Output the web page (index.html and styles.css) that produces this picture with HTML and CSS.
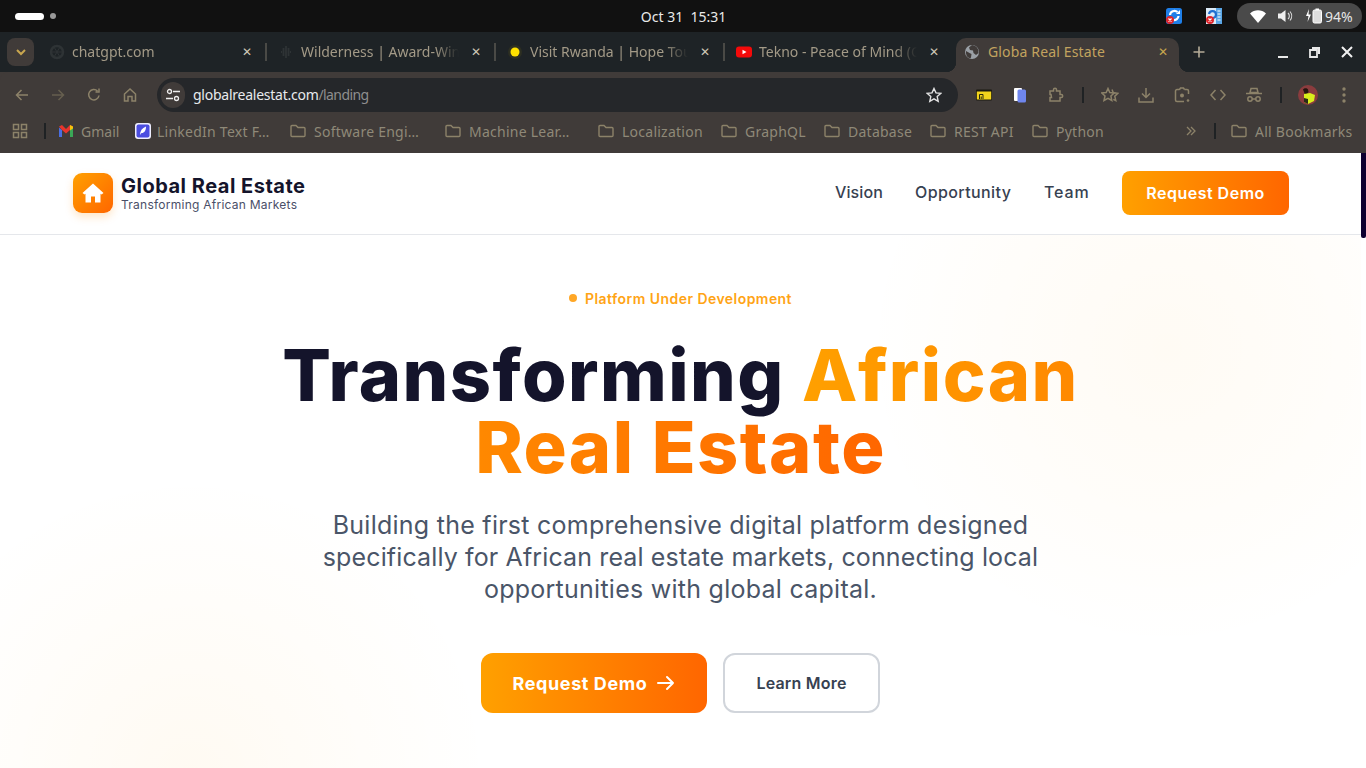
FILE: index.html
```html
<!DOCTYPE html>
<html lang="en">
<head>
<meta charset="utf-8">
<title>Globa Real Estate</title>
<link rel="stylesheet" href="styles.css">
</head>
<body>
<div class="topbar">
  <div class="activities"><span class="pill-on"></span><span class="pill-off"></span></div>
  <div class="clock">Oct 31&nbsp;&nbsp;15:31</div>
  <div class="tray">
    <svg class="tray-app" width="18" height="18" viewBox="0 0 18 18"><rect x="1" y="1" width="16" height="16" rx="2.5" fill="#1f7fe8"/><path d="M5 8a4.500 4.500 0 0 1 7.500-3M13.500 9a4.500 4.500 0 0 1-5 4" fill="none" stroke="#fff" stroke-width="2.200"/><path d="M11 7h4V3z" fill="#fff"/><circle cx="5" cy="13" r="4" fill="#e0242a"/><path d="M3.500 11.500l3 3m0-3l-3 3" stroke="#fff" stroke-width="1.200"/></svg>
    <svg class="tray-app second" width="18" height="18" viewBox="0 0 18 18"><rect x="1" y="1" width="16" height="16" fill="#dcebf8"/><rect x="11" y="1" width="6" height="16" fill="#5aa6e6"/><path d="M4 7a3.500 3.500 0 1 1 4 4" fill="none" stroke="#1f6fd0" stroke-width="2.200"/><path d="M12.500 4h3m-3 3h3m-3 3h3m-3 3h3" stroke="#fff"/><circle cx="5" cy="13" r="4" fill="#e0242a"/><path d="M3.500 11.500l3 3m0-3l-3 3" stroke="#fff" stroke-width="1.200"/></svg>
    <div class="status">
      <svg width="16" height="13" viewBox="0 0 16 13"><path d="M0 3.500C4.500-.8 11.500-.8 16 3.500L8 13z" fill="#fff"/></svg>
      <svg class="vol" width="16" height="14" viewBox="0 0 16 14"><path d="M0 4.500h3L7.500 1v12L3 9.500H0z" fill="#eee"/><path d="M10 4a4 4 0 0 1 0 6M12 2.500a7 7 0 0 1 0 9" fill="none" stroke="#ddd" stroke-width="1.100"/></svg>
      <svg class="batt" width="18" height="16" viewBox="0 0 18 16"><path d="M4 1L1 8h2.500L2.500 14 6 6.500H3.500z" fill="#fff"/><rect x="8" y="2" width="8.500" height="13" rx="1.500" fill="#ddd" stroke="#fff"/><rect x="10.500" y=".5" width="3.500" height="1.500" fill="#fff"/></svg>
      <span class="pct">94%</span>
    </div>
  </div>
</div>

<div class="tabstrip">
  <div class="tab-menu"><svg width="12" height="8" viewBox="0 0 12 8"><path d="M2 2l4 4 4-4" fill="none" stroke="#c8a64f" stroke-width="2"/></svg></div>
  <div class="tab">
    <svg class="fav" width="16" height="16" viewBox="0 0 16 16"><circle cx="8" cy="8" r="6" fill="none" stroke="#2e3335" stroke-width="2.500"/><path d="M5 3l6 10M11 3L5 13M2 8h12" stroke="#2e3335"/></svg>
    <span class="tab-title">chatgpt.com</span><span class="tab-x">✕</span><i class="tab-sep"></i>
  </div>
  <div class="tab">
    <svg class="fav" width="16" height="16" viewBox="0 0 16 16"><path d="M3 8h1M5.500 4v8M8 2v12M10.500 4v8M13 8h-1" stroke="#2e3335" stroke-width="1.800"/></svg>
    <span class="tab-title">Wilderness | Award-Win</span><span class="tab-x">✕</span><i class="tab-sep"></i>
  </div>
  <div class="tab">
    <svg class="fav" width="16" height="16" viewBox="0 0 16 16"><circle cx="8" cy="8" r="7" fill="#2d2f22"/><circle cx="8" cy="8" r="4.500" fill="#ffe100"/></svg>
    <span class="tab-title">Visit Rwanda | Hope Tou</span><span class="tab-x">✕</span><i class="tab-sep"></i>
  </div>
  <div class="tab">
    <svg class="fav" width="16" height="16" viewBox="0 0 16 16"><rect y="2.500" width="16" height="11" rx="3" fill="#f40a0a"/><path d="M6.500 5.700v4.600L10.500 8z" fill="#fff"/></svg>
    <span class="tab-title">Tekno - Peace of Mind (O</span><span class="tab-x">✕</span>
  </div>
  <div class="tab tab-active">
    <svg class="fav" width="16" height="16" viewBox="0 0 16 16"><circle cx="8" cy="8" r="7" fill="#9aa0a6"/><path d="M8 1L5 3.500l1 2.500 3 .5.500 2.500L12 11l2.500-2A7 7 0 0 0 8 1zM2 7l3.500 2 2 1-.5 3.500-1 1A7 7 0 0 1 2 7z" fill="#403b39"/></svg>
    <span class="tab-title">Globa Real Estate</span><span class="tab-x">✕</span>
  </div>
  <div class="tab-new"><svg width="14" height="14" viewBox="0 0 14 14"><path d="M7 1.500v11M1.500 7h11" stroke="#b5ac98" stroke-width="1.600"/></svg></div>
  <div class="winctl">
    <svg width="12" height="12" viewBox="0 0 12 12"><rect x="1" y="10" width="10" height="2" fill="#e8e8e8"/></svg>
    <svg width="12" height="12" viewBox="0 0 12 12"><path d="M3 1h8v7H9V3H3z" fill="#e8e8e8"/><path d="M1 4h7v7H1z" fill="#1e2326" stroke="#e8e8e8" stroke-width="1.800"/></svg>
    <svg width="12" height="12" viewBox="0 0 12 12"><path d="M1 1l10 10M11 1L1 11" stroke="#f0f0f0" stroke-width="2"/></svg>
  </div>
</div>

<div class="toolbar">
  <div class="tool"><svg width="16" height="16" viewBox="0 0 16 16"><path d="M14 8H3M7.500 3L2.500 8l5 5" class="ic"/></svg></div>
  <div class="tool"><svg width="16" height="16" viewBox="0 0 16 16"><path d="M2 8h11M8.500 3l5 5-5 5" class="ic dim"/></svg></div>
  <div class="tool"><svg width="16" height="16" viewBox="0 0 16 16"><path d="M13 8.500A5.200 5.200 0 1 1 11.500 4M13 1.500V5H9.500" class="ic"/></svg></div>
  <div class="tool"><svg width="16" height="16" viewBox="0 0 16 16"><path d="M2.500 7L8 2l5.500 5v7H10V9.500H6V14H2.500z" class="ic"/></svg></div>
  <div class="omnibox">
    <div class="site-ctl"><svg width="16" height="16" viewBox="0 0 16 16"><circle cx="4.500" cy="4.500" r="2" fill="none" stroke="#eee" stroke-width="1.300"/><path d="M8 4.500h7M1 11.500h7" stroke="#eee" stroke-width="1.300"/><circle cx="11.500" cy="11.500" r="2" fill="none" stroke="#eee" stroke-width="1.300"/></svg></div>
    <div class="url"><span class="host">globalrealestat.com</span><span class="path">/landing</span></div>
    <svg class="url-star" width="16" height="16" viewBox="0 0 16 16"><path d="M8 1.500l2 4.400 4.700.5-3.500 3.200 1 4.700L8 11.900l-4.200 2.400 1-4.700L1.300 6.400 6 5.900z" fill="none" stroke="#e3e3e3" stroke-width="1.400"/></svg>
  </div>
  <div class="tools-right">
    <div class="tool"><svg width="16" height="12" viewBox="0 0 16 12"><rect width="16" height="11" y=".5" rx="1" fill="#1a1a12"/><rect x=".8" y="2.500" width="14.400" height="8" fill="#f2d41c"/><path d="M3.500 10V5.500h3.500V10M5.200 10V7.500" fill="none" stroke="#2a2a10" stroke-width="1"/></svg></div>
    <div class="tool"><svg width="14" height="16" viewBox="0 0 14 16"><rect x="1" y="1" width="8" height="13" rx="1" fill="#fff"/><rect x="4.500" y="2.500" width="8.500" height="13" rx="1.500" fill="#6f86ee"/></svg></div>
    <div class="tool"><svg width="16" height="16" viewBox="0 0 16 16"><path d="M2 4h3.500V2.800a1.500 1.500 0 0 1 3 0V4H12v3.500h1.200a1.500 1.500 0 0 1 0 3H12V14H2v-3.500h1.500l-.5-3H2z" class="ic"/></svg></div>
    <i class="sep"></i>
    <div class="tool"><svg width="18" height="16" viewBox="0 0 18 16"><path d="M7 1.500l1.800 4 4.400.5-3.300 3 .9 4.500L7 11.300 3 13.500l1-4.500L.8 6l4.400-.5z" class="ic"/><path d="M11 2.500l1.300 3.300 4.500.5-3 3 1 4.400-2.500-1.300" class="ic"/></svg></div>
    <div class="tool"><svg width="16" height="16" viewBox="0 0 16 16"><path d="M8 1v9M4 6.500L8 10.500l4-4M1 10.500V15h14v-4.500" class="ic"/></svg></div>
    <div class="tool"><svg width="16" height="16" viewBox="0 0 16 16"><path d="M5.500 2.500L6.500 1h3l1 1.500M1.500 6V4a1.500 1.500 0 0 1 1.500-1.500h2.500M10.500 2.500H13A1.500 1.500 0 0 1 14.500 4v3M1.500 6v7A1.500 1.500 0 0 0 3 14.500h7" class="ic"/><circle cx="8" cy="8.500" r="2" fill="#8c8269"/><circle cx="14" cy="13.500" r="1.300" fill="#8c8269"/></svg></div>
    <div class="tool"><svg width="16" height="12" viewBox="0 0 16 12"><path d="M5.500 1L1 6l4.500 5M10.500 1L15 6l-4.500 5" class="ic"/></svg></div>
    <div class="tool"><svg width="18" height="16" viewBox="0 0 18 16"><path d="M6 1.500h6l1 4H5z" fill="none" stroke="#8c8269" stroke-width="1.500"/><path d="M1 6.500h16" class="ic"/><circle cx="5" cy="12" r="2.200" class="ic"/><circle cx="13" cy="12" r="2.200" class="ic"/><path d="M7.200 12h3.600" class="ic"/></svg></div>
    <i class="sep"></i>
    <div class="tool"><svg width="20" height="20" viewBox="0 0 20 20"><circle cx="10" cy="10" r="10" fill="#8a3c3e"/><path d="M5 4.500c1-1.500 4-1.800 5 0l.5 2.500-2 2.500H7z" fill="#23150f"/><path d="M6 9l6-1 5 2-1 6-6 3-4-2z" fill="#d9ec1c"/><path d="M6 13l4 1v5l-4-2z" fill="#2a2a18"/></svg></div>
    <div class="tool"><svg width="4" height="16" viewBox="0 0 4 16"><circle cx="2" cy="2" r="1.700" fill="#8c8269"/><circle cx="2" cy="8" r="1.700" fill="#8c8269"/><circle cx="2" cy="14" r="1.700" fill="#8c8269"/></svg></div>
  </div>
</div>

<div class="bookmarks">
  <div class="bm bm-apps"><svg width="16" height="16" viewBox="0 0 16 16"><path d="M1.500 1.500h5v5h-5zM9.500 1.500h5v5h-5zM1.500 9.500h5v5h-5zM9.500 9.500h5v5h-5z" class="ic"/></svg></div>
  <div class="bm bm-sep"><i class="sep"></i></div>
  <div class="bm"><svg class="gm" width="14" height="12" viewBox="0 0 14 12"><path d="M0 2.500V12h3V5z" fill="#4a6ee0"/><path d="M14 2.500V12h-3V5z" fill="#3aa757"/><path d="M0 1.500L3 0l4 4 4-4 3 1.500-3 3.500-4 3.500L3 5z" fill="#e8352c"/><path d="M11 0l3 1.500V3.500L11 5.500z" fill="#f4c20d"/></svg><span class="tight">Gmail</span></div>
  <div class="bm bm-li"><svg width="16" height="16" viewBox="0 0 16 16"><rect width="16" height="16" rx="3" fill="#eeeeff"/><rect x="1.500" y="1.500" width="13" height="13" rx="2" fill="#4b4de0"/><path d="M5 12c0-4 2-7 6-8.500 0 4-1.500 6.500-4.500 6.500z" fill="#fff"/></svg><span>LinkedIn Text F…</span></div>
  <div class="bm"><svg class="fold" width="16" height="14" viewBox="0 0 16 14"><path d="M1 2.500A1 1 0 0 1 2 1.500h4l2 2h6a1 1 0 0 1 1 1v7a1 1 0 0 1-1 1H2a1 1 0 0 1-1-1z"/></svg><span>Software Engi…</span></div>
  <div class="bm"><svg class="fold" width="16" height="14" viewBox="0 0 16 14"><path d="M1 2.500A1 1 0 0 1 2 1.500h4l2 2h6a1 1 0 0 1 1 1v7a1 1 0 0 1-1 1H2a1 1 0 0 1-1-1z"/></svg><span>Machine Lear…</span></div>
  <div class="bm"><svg class="fold" width="16" height="14" viewBox="0 0 16 14"><path d="M1 2.500A1 1 0 0 1 2 1.500h4l2 2h6a1 1 0 0 1 1 1v7a1 1 0 0 1-1 1H2a1 1 0 0 1-1-1z"/></svg><span>Localization</span></div>
  <div class="bm"><svg class="fold" width="16" height="14" viewBox="0 0 16 14"><path d="M1 2.500A1 1 0 0 1 2 1.500h4l2 2h6a1 1 0 0 1 1 1v7a1 1 0 0 1-1 1H2a1 1 0 0 1-1-1z"/></svg><span>GraphQL</span></div>
  <div class="bm"><svg class="fold" width="16" height="14" viewBox="0 0 16 14"><path d="M1 2.500A1 1 0 0 1 2 1.500h4l2 2h6a1 1 0 0 1 1 1v7a1 1 0 0 1-1 1H2a1 1 0 0 1-1-1z"/></svg><span>Database</span></div>
  <div class="bm"><svg class="fold" width="16" height="14" viewBox="0 0 16 14"><path d="M1 2.500A1 1 0 0 1 2 1.500h4l2 2h6a1 1 0 0 1 1 1v7a1 1 0 0 1-1 1H2a1 1 0 0 1-1-1z"/></svg><span>REST API</span></div>
  <div class="bm"><svg class="fold" width="16" height="14" viewBox="0 0 16 14"><path d="M1 2.500A1 1 0 0 1 2 1.500h4l2 2h6a1 1 0 0 1 1 1v7a1 1 0 0 1-1 1H2a1 1 0 0 1-1-1z"/></svg><span>Python</span></div>
  <div class="bm bm-more"><svg width="10" height="10" viewBox="0 0 10 10"><path d="M1 1l4 4-4 4M5 1l4 4-4 4" class="ic thin"/></svg></div>
  <div class="bm bm-sep"><i class="sep"></i></div>
  <div class="bm"><svg class="fold" width="16" height="14" viewBox="0 0 16 14"><path d="M1 2.500A1 1 0 0 1 2 1.500h4l2 2h6a1 1 0 0 1 1 1v7a1 1 0 0 1-1 1H2a1 1 0 0 1-1-1z"/></svg><span>All Bookmarks</span></div>
</div>

<div class="viewport">
  <div class="page">
    <header class="site-header">
      <div class="brand">
        <div class="logo"><svg width="22" height="20" viewBox="0 0 22 20"><path d="M11 0.500L21.500 10 19.500 11.500 18.500 10.700V19.500H13V13.500H9V19.500H3.500V10.700L2.500 11.500 .5 10z" fill="#fff"/></svg></div>
        <div class="brand-text">
          <div class="brand-name">Global Real Estate</div>
          <div class="brand-sub">Transforming African Markets</div>
        </div>
      </div>
      <nav class="nav">
        <a class="nav-link nav-vision">Vision</a>
        <a class="nav-link nav-opp">Opportunity</a>
        <a class="nav-link nav-team">Team</a>
        <a class="nav-cta">Request Demo</a>
      </nav>
    </header>
    <main class="hero">
      <div class="badge"><i class="badge-dot"></i><span>Platform Under Development</span></div>
      <h1 class="headline">Transforming <span class="grad">African Real&nbsp;Estate</span></h1>
      <p class="lead">Building the first comprehensive digital platform designed<br><span class="lead-mid">specifically for African real estate markets, connecting local</span><br>opportunities with global capital.</p>
      <div class="actions">
        <a class="btn-primary"><span>Request Demo</span><svg width="18" height="16" viewBox="0 0 18 16"><path d="M1 8h15M10 2l6 6-6 6" fill="none" stroke="#fff" stroke-width="2" stroke-linecap="round" stroke-linejoin="round"/></svg></a>
        <a class="btn-secondary">Learn More</a>
      </div>
    </main>
  </div>
  <div class="scrollbar"><div class="thumb"></div></div>
</div>
</body>
</html>
```
FILE: styles.css
```css
* { box-sizing: border-box; }
html, body { margin: 0; height: 768px; overflow: hidden; }
body { display: flex; flex-direction: column; background: #403b39; font-family: "Noto Sans", sans-serif; }
svg { display: block; flex: none; }
.ic { fill: none; stroke: #8c8269; stroke-width: 1.500; }
.ic.dim { stroke: #665f4f; }
.ic.thin { stroke-width: 1.300; }

.topbar { height: 32px; background: #111; display: flex; align-items: center; position: relative; flex: none; }
.activities { display: flex; align-items: center; gap: 6px; padding-left: 15px; width: 300px; }
.pill-on { width: 29px; height: 7px; border-radius: 4px; background: #fff; }
.pill-off { width: 6px; height: 6px; border-radius: 50%; background: #999; }
.clock { flex: 1; text-align: center; color: #e9e9e9; font-size: 14px; padding-left: 1px; margin-right: 300px; }
.tray { position: absolute; right: 4px; top: 3px; display: flex; align-items: center; }
.tray-app { margin-right: 22px; }
.tray-app.second { margin-right: 14px; }
.status { width: 125px; height: 26px; border-radius: 13px; background: #4a4a4a; display: flex; align-items: center; padding-left: 13px; }
.vol { margin-left: 12px; }
.batt { margin-left: 11px; }
.pct { color: #e6e6e6; font-size: 14px; margin-left: 2px; }

.tabstrip { height: 40px; background: #1e2326; display: flex; align-items: flex-end; position: relative; flex: none; padding-left: 37px; }
.tab-menu { position: absolute; left: 7px; top: 6px; width: 27px; height: 28px; border-radius: 8px; background: #403b39; display: flex; align-items: center; justify-content: center; }
.tab { width: 229px; height: 34px; display: flex; align-items: center; padding: 0 0 7px 12px; position: relative; flex: none; }
.fav { margin-right: 7px; }
.tab-title { width: 158px; overflow: hidden; white-space: nowrap; color: #a39a87; font-size: 14px; -webkit-mask-image: linear-gradient(90deg, #000 85%, transparent); mask-image: linear-gradient(90deg, #000 85%, transparent); }
.tab-x { position: absolute; left: 204px; top: 6px; width: 12px; font-size: 12px; line-height: 16px; color: #cfc8b8; text-align: center; }
.tab-sep { position: absolute; left: 228px; top: 5px; width: 2px; height: 18px; background: #4a4a46; }
.tab-active { width: 223px; margin-left: 3px; background: #403b39; border-radius: 10px 10px 0 0; padding-left: 8px; z-index: 1; }
.tab-active .fav { margin-right: 8px; }
.tab-active .tab-title { color: #c2a35f; width: 170px; letter-spacing: .15px; -webkit-mask-image: none; mask-image: none; }
.tab-active .tab-x { left: 201px; color: #c8a64f; }
.tab-active::before, .tab-active::after { content: ""; position: absolute; bottom: 0; width: 10px; height: 10px; }
.tab-active::before { left: -10px; background: radial-gradient(circle at 0 0, transparent 10px, #403b39 10.500px); }
.tab-active::after { right: -10px; background: radial-gradient(circle at 100% 0, transparent 10px, #403b39 10.500px); }
.tab-new { position: absolute; left: 1192px; top: 13px; }
.winctl { position: absolute; right: 13px; top: 14px; display: flex; gap: 20px; }

.toolbar { height: 40px; background: #403b39; border-radius: 8px 8px 0 0; display: flex; align-items: center; flex: none; padding-left: 4px; padding-top: 6px; }
.tool { width: 36px; height: 34px; display: flex; align-items: center; justify-content: center; flex: none; }
.omnibox { width: 801px; height: 34px; margin-left: 9px; border-radius: 17px; background: #25272a; display: flex; align-items: center; padding-left: 4px; position: relative; flex: none; }
.site-ctl { width: 24px; height: 26px; border-radius: 13px; background: #403b39; display: flex; align-items: center; justify-content: center; }
.url { margin-left: 8px; font-size: 14px; white-space: nowrap; padding-bottom: 1px; }
.host { color: #e8eaed; letter-spacing: -.25px; }
.path { color: #8e8e8e; letter-spacing: -.6px; }
.url-star { position: absolute; right: 16px; top: 9px; }
.tools-right { display: flex; align-items: center; padding-left: 8px; }
.sep { display: block; width: 2px; height: 16px; background: #1f2224; flex: none; }
.tools-right .sep { margin: 0 8px; }

.bookmarks { height: 41px; background: #403b39; display: grid; grid-template-columns: 44px 14px 77px 155px 155px 153px 123px 103px 106px 102px 144px 38px 17px 1fr; align-items: center; flex: none; padding-bottom: 3px; }
.bm { display: flex; align-items: center; gap: 8px; color: #8f8978; font-size: 14px; letter-spacing: .25px; white-space: nowrap; min-width: 0; }
.tight { letter-spacing: 0; }
.bm-apps { padding-left: 12px; }
.bm-li { gap: 6px; }
.gm { margin-left: 1px; }
.bm-more { justify-content: center; padding-right: 8px; }
.fold path { fill: none; stroke: #8c8269; stroke-width: 1.400; }

.viewport { flex: 1; display: flex; background: #fff; min-height: 0; }
.page { flex: 1; min-width: 0; display: flex; flex-direction: column; font-family: Inter, sans-serif; }
.scrollbar { width: 5px; flex: none; background: #fff; }
.thumb { height: 85px; background: #0d0030; border-radius: 0 0 2px 2px; }

.site-header { height: 82px; flex: none; border-bottom: 1px solid #e5e7eb; display: flex; align-items: center; justify-content: space-between; padding: 0 72px 1px 73px; background: #fff; }
.brand { display: flex; align-items: center; gap: 8px; }
.logo { width: 40px; height: 40px; border-radius: 9px; background: linear-gradient(135deg, #ffa000, #ff6600); display: flex; align-items: center; justify-content: center; box-shadow: 0 4px 8px rgba(255, 140, 0, .22); }
.brand-name { font-size: 20px; line-height: 24px; font-weight: 700; color: #14142b; letter-spacing: .5px; }
.brand-sub { font-size: 12px; line-height: 14px; color: #4a4f68; letter-spacing: .25px; }
.nav { display: flex; align-items: center; }
.nav-link { font-size: 16px; font-weight: 500; color: #374151; letter-spacing: .4px; padding-bottom: 3px; }
.nav-vision { width: 80px; letter-spacing: .1px; }
.nav-opp { width: 129px; }
.nav-team { width: 78px; letter-spacing: .9px; }
.nav-cta { width: 167px; height: 44px; border-radius: 8px; background: linear-gradient(90deg, #ffa000, #ff6600); color: #fff; font-size: 16px; font-weight: 600; letter-spacing: .5px; display: flex; align-items: center; justify-content: center; }

.hero { flex: 1; display: flex; flex-direction: column; align-items: center; padding-top: 53px; background:
  radial-gradient(circle 300px at 1167px 113px, rgba(255, 160, 0, .045), rgba(255, 160, 0, .02) 60%, transparent),
  radial-gradient(circle 300px at 190px 540px, rgba(255, 160, 0, .05), rgba(255, 160, 0, .02) 60%, transparent), #fff; }
.badge { display: flex; align-items: center; gap: 8px; height: 20px; color: #ffa415; font-size: 14px; font-weight: 600; letter-spacing: .45px; }
.badge-dot { width: 8px; height: 8px; border-radius: 50%; background: #ffa726; }
.headline { margin: 31px 0 0; width: 900px; text-align: center; font-size: 72px; line-height: 72px; font-weight: 800; letter-spacing: 1.45px; color: #14142b; }
.grad { background: linear-gradient(90deg, #ffa000, #ff6600); -webkit-background-clip: text; background-clip: text; color: transparent; }
.lead { margin: 26px 0 0; text-align: center; font-size: 25px; line-height: 32px; letter-spacing: .26px; color: #4a5568; }
.lead-mid { letter-spacing: .13px; }
.actions { display: flex; gap: 16px; margin-top: 48px; }
.btn-primary { width: 226px; height: 60px; border-radius: 12px; background: linear-gradient(90deg, #ffa000, #ff6600); color: #fff; font-size: 18px; font-weight: 700; letter-spacing: .6px; display: flex; align-items: center; justify-content: center; gap: 10px; }
.btn-secondary { width: 157px; height: 60px; border-radius: 12px; border: 2px solid #d1d5db; color: #374151; font-size: 16px; font-weight: 600; letter-spacing: .2px; display: flex; align-items: center; justify-content: center; background: #fff; }
```
